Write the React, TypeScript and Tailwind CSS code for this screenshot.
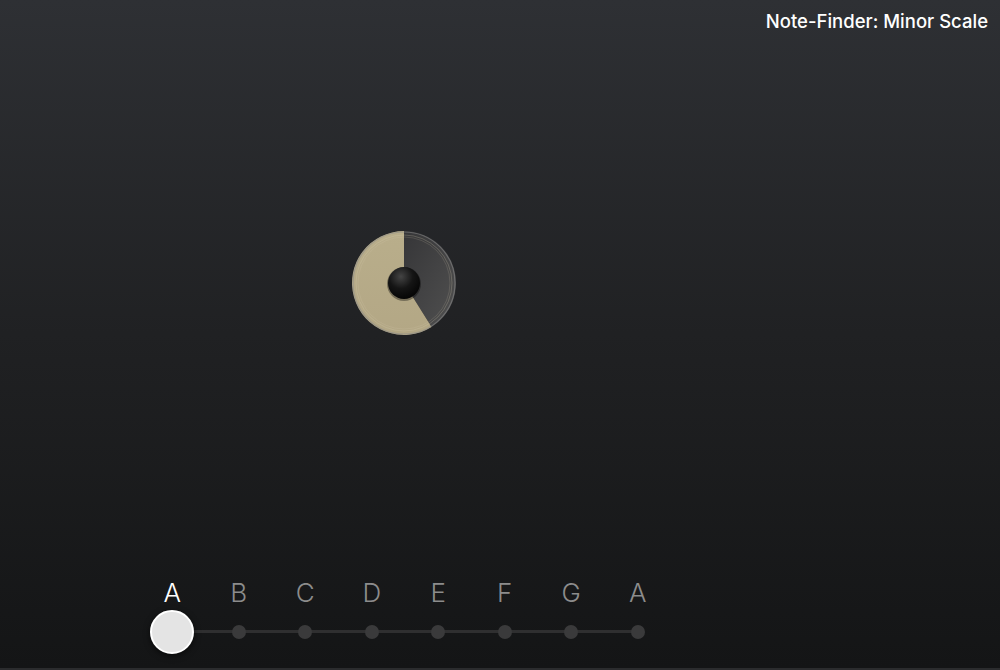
import React from "react"

const notes = ["A", "B", "C", "D", "E", "F", "G", "A"]

function Dial() {
  // progress sector: dark part clockwise 0..148deg, tan for the rest
  const cx = 54
  const cy = 54
  const r = 52
  const a = (148 * Math.PI) / 180
  const px = cx + r * Math.sin(a)
  const py = cy - r * Math.cos(a)
  return (
    <svg width="108" height="108" viewBox="0 0 108 108">
      <defs>
        <radialGradient id="knob" cx="40%" cy="30%" r="75%">
          <stop offset="0%" stopColor="#444" />
          <stop offset="50%" stopColor="#151515" />
          <stop offset="100%" stopColor="#030303" />
        </radialGradient>
        <linearGradient id="tan" x1="0" y1="0" x2="0" y2="1">
          <stop offset="0%" stopColor="#b9ae8b" />
          <stop offset="100%" stopColor="#b3a785" />
        </linearGradient>
        <linearGradient id="dark" x1="0" y1="0" x2="1" y2="1">
          <stop offset="0%" stopColor="#363638" />
          <stop offset="100%" stopColor="#505050" />
        </linearGradient>
      </defs>
      <path d={`M${cx},${cy} L${cx},${cy - r} A${r},${r} 0 0 1 ${px},${py} Z`} fill="url(#dark)" />
      <path d={`M${cx},${cy} L${px},${py} A${r},${r} 0 1 1 ${cx},${cy - r} Z`} fill="url(#tan)" />
      <circle cx={cx} cy={cy} r={r - 1} fill="none" stroke="#8a8a8a" strokeOpacity="0.55" strokeWidth="1.2" />
      <circle cx={cx} cy={cy} r={r - 4} fill="none" stroke="#d8cfb2" strokeOpacity="0.3" strokeWidth="0.8" />
      <circle cx={cx} cy={cy} r={r - 6} fill="none" stroke="#d8cfb2" strokeOpacity="0.2" strokeWidth="0.8" />
      <circle cx={cx} cy={cy + 1} r="17" fill="#000" opacity="0.35" />
      <circle cx={cx} cy={cy} r="16" fill="url(#knob)" />
    </svg>
  )
}

export default function App() {
  return (
    <div
      className="relative h-[670px] w-[1000px] overflow-hidden bg-gradient-to-b from-[#2e3034] via-[#202123] to-[#141516] border-b-2 border-[#2b2c2e]"
      style={{ fontFamily: "Inter, 'Noto Sans', sans-serif" }}
    >
      <div className="flex justify-end pr-3 pt-[9px]">
        <h1 className="text-[18.5px] leading-6 font-medium text-white">Note-Finder: Minor Scale</h1>
      </div>

      <div className="ml-[350px] mt-[196px]">
        <Dial />
      </div>

      <div className="ml-[139px] mt-[240px] w-[532px]">
        <div className="grid grid-cols-8">
          {notes.map((n, i) => (
            <div
              key={i}
              className={`text-center text-[26px] leading-8 font-light ${i === 0 ? "text-white" : "text-[#8c8c8c]"}`}
            >
              {n}
            </div>
          ))}
        </div>
        <div className="relative mt-px h-[44px]">
          <div className="absolute left-[33px] right-[33px] top-[20px] h-[3px] bg-[#2f2f30]" />
          <div className="relative grid h-full grid-cols-8">
            {notes.map((_, i) => (
              <div key={i} className="flex items-center justify-center">
                {i === 0 ? (
                  <div className="h-[44px] w-[44px] rounded-full border-2 border-white bg-[#e4e4e4] shadow-[0_2px_6px_rgba(0,0,0,0.6)]" />
                ) : (
                  <div className="h-[14px] w-[14px] rounded-full bg-[#3a3a3b]" />
                )}
              </div>
            ))}
          </div>
        </div>
      </div>
    </div>
  )
}
